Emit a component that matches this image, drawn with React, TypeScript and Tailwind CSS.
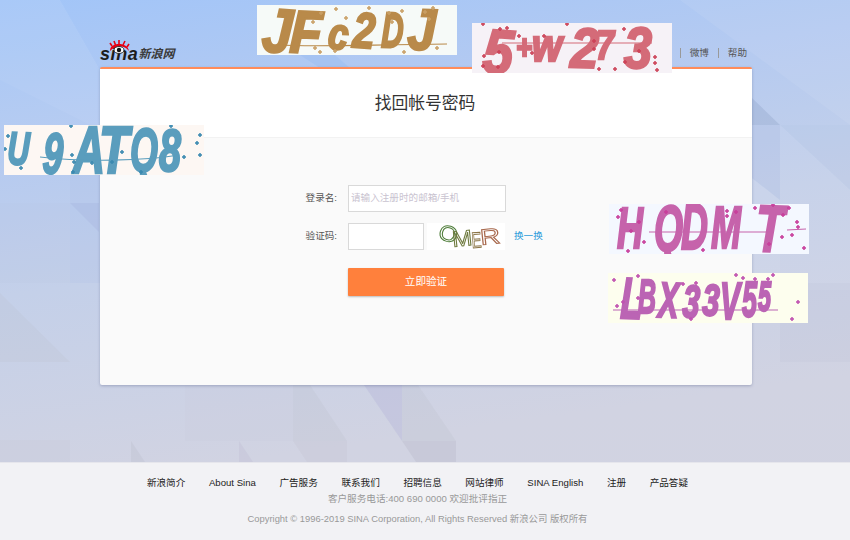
const cjk = '"Liberation Sans", "Noto Sans CJK SC", sans-serif';

// char, x, width, baseline, font size, rotation
type Glyph = [string, number, number, number, number, number?];

type CaptchaProps = {
  glyphs: Glyph[];
  color: string;
  dot: string;
  bg: string;
  line: string;
  noise: [number, number][];
  className: string;
};

// distorted code pictures that sit on top of the page
function Captcha({ glyphs, color, dot, bg, line, noise, className }: CaptchaProps) {
  return (
    <svg width="200" height="50" viewBox="0 0 200 50" className={`absolute ${className}`} style={{ background: bg }}>
      <g className="blur-[0.4px]">
        {glyphs.map(([ch, x, w, y, size, rot], i) => (
          <text
            key={i}
            transform={`translate(${x} ${y}) rotate(${rot ?? 0})`}
            textLength={w}
            lengthAdjust="spacingAndGlyphs"
            fontFamily="Liberation Sans"
            fontWeight="700"
            fontStyle="italic"
            fontSize={size}
            fill={color}
            stroke={color}
            strokeWidth="2.4"
          >
            {ch}
          </text>
        ))}
        <path d={line} stroke={color} strokeWidth="1.1" fill="none" />
        {noise.map(([x, y], i) => (
          <path key={i} d={`M${x - 2} ${y}H${x + 2}M${x} ${y - 2}V${y + 2}`} stroke={dot} strokeWidth="1.5" />
        ))}
      </g>
    </svg>
  );
}

function Background() {
  return (
    <svg className="absolute inset-0" width="850" height="540" viewBox="0 0 850 540">
      {/* top left */}
      <polygon points="0,0 60,0 100,70 100,130 0,80" fill="#ffffff" fillOpacity="0.08" />
      <polygon points="0,80 100,130 100,170 0,170" fill="#ffffff" fillOpacity="0.04" />
      <polygon points="300,55 335,55 350,68 320,68" fill="#7fb0f2" fillOpacity="0.2" />
      {/* top right */}
      <polygon points="680,0 850,125 850,0" fill="#ffffff" fillOpacity="0.07" />
      <polygon points="752,98 780,125 752,125" fill="#8fa4c9" fillOpacity="0.35" />
      <polygon points="752,125 780,125 780,200 752,178" fill="#a9b8e0" fillOpacity="0.2" />
      <polygon points="780,125 850,190 850,125" fill="#a9b8dc" fillOpacity="0.1" />
      <polygon points="780,125 850,190 850,290 780,290" fill="#ffffff" fillOpacity="0.06" />
      <polygon points="752,178 780,200 780,290 752,290" fill="#ffffff" fillOpacity="0.1" />
      <polygon points="780,283 850,283 850,362 780,362" fill="#a8a8c0" fillOpacity="0.08" />
      {/* left side */}
      <polygon points="70,170 100,170 100,283 70,283" fill="#a9bce4" fillOpacity="0.16" />
      <polygon points="70,203 99,203 99,232" fill="#a3b0dc" fillOpacity="0.3" />
      <polygon points="0,203 70,203 70,283 0,283" fill="#b7bed8" fillOpacity="0.08" />
      <polygon points="0,293 70,362 0,362" fill="#bcbecc" fillOpacity="0.22" />
      <polygon points="0,440 70,440 70,462 0,462" fill="#bcbecc" fillOpacity="0.14" />
      {/* bottom band */}
      <polygon points="293,385 310,385 347,441 293,441" fill="#bbbecd" fillOpacity="0.25" />
      <polygon points="364,385 402,385 402,441" fill="#b3b3d8" fillOpacity="0.35" />
      <polygon points="402,385 418,385 456,441 402,441" fill="#bbbecd" fillOpacity="0.25" />
      <polygon points="402,441 456,441 456,462 416,462" fill="#b8b8c8" fillOpacity="0.35" />
      <polygon points="131,441 145,462 131,462" fill="#b8bccb" fillOpacity="0.3" />
      <polygon points="239,441 253,462 239,462" fill="#bdb8d0" fillOpacity="0.3" />
      <polygon points="293,441 347,441 347,462 307,462" fill="#c4c2d2" fillOpacity="0.3" />
      <polygon points="185,385 293,385 293,441 185,441" fill="#c0c4d6" fillOpacity="0.1" />
    </svg>
  );
}

function SinaLogo() {
  return (
    <div className="flex items-end h-[25px] w-[78px] relative pb-[2px]">
      <svg width="22" height="14" viewBox="0 0 22 14" className="absolute left-[8px] top-[2px]">
        <path d="M2 11C2 6 6 4 11 4s9 2 10 7C18 7 14 6.5 11 6.5S5 8 2 11Z" fill="#e60012" />
        <path d="M4 6 2 3M7.500 5 6 1M11 4V0M15 5l2-4M19 7l2-3" stroke="#e60012" strokeWidth="1.6" />
        <ellipse cx="11" cy="10" rx="5" ry="3.500" fill="#fff" stroke="#222" strokeWidth="0.900" />
        <circle cx="11" cy="10" r="2.200" fill="#111" />
      </svg>
      <span
        className="font-bold italic text-[18px] leading-[14px] tracking-[0.6px] text-[#1c1c1c]"
        style={{ fontFamily: "Liberation Sans" }}
      >
        sina
      </span>
      <span className="italic font-bold text-[12px] leading-[14px] text-[#3a3a3a]">新浪网</span>
    </div>
  );
}

function SmallCaptcha() {
  return (
    <svg width="78" height="27" viewBox="0 0 78 27" className="bg-white">
      <g className="blur-[0.3px]" fontFamily="Liberation Sans" fontSize="22" fill="none" strokeWidth="1">
        <text transform="translate(10 15) rotate(18)" textLength="19" lengthAdjust="spacingAndGlyphs" stroke="#4f7d3a">O</text>
        <text transform="translate(26 24) rotate(-6)" textLength="20" lengthAdjust="spacingAndGlyphs" stroke="#6f7a3e">M</text>
        <text transform="translate(45 25) rotate(-4)" textLength="10" lengthAdjust="spacingAndGlyphs" stroke="#8a7446">E</text>
        <text transform="translate(54 22) rotate(-6)" textLength="20" lengthAdjust="spacingAndGlyphs" stroke="#a8694d">R</text>
      </g>
    </svg>
  );
}

const footerLinks = ["新浪简介", "About Sina", "广告服务", "联系我们", "招聘信息", "网站律师", "SINA English", "注册", "产品答疑"];

export default function App() {
  return (
    <div
      className="relative w-[850px] h-[540px] overflow-hidden flex flex-col bg-[linear-gradient(172deg,#a2c5f8_0%,#b4caf1_22%,#c4d0e9_45%,#d1d3e2_75%,#d2d3e1_100%)]"
      style={{ fontFamily: cjk }}
    >
      <Background />

      <div className="relative w-[652px] ml-[100px] flex-1 flex flex-col">
        <div className="h-[67px] flex items-end justify-between pb-[4px]">
          <SinaLogo />
          <div className="flex items-center text-[9.6px] text-[#555] pb-[3px] pr-[5px]">
            <span className="h-[10px] border-l border-[#999] mr-[9px]" />
            <span>微博</span>
            <span className="h-[10px] border-l border-[#999] mx-[9px]" />
            <span>帮助</span>
          </div>
        </div>

        <div className="h-[318px] bg-[#fafafa] border-t-2 border-[#ff8c5a] rounded-[2px] shadow-[0_1px_3px_rgba(90,100,140,0.4)] flex flex-col">
          <div className="h-[69px] bg-white border-b border-[#f2f2f2] flex items-center justify-center pt-[1px] pr-[2px] text-[16.8px] text-[#333]">
            找回帐号密码
          </div>

          <div className="pt-[47px] flex flex-col text-[9.6px] text-[#555]">
            <div className="flex items-center h-[27px]">
              <span className="w-[237px] text-right">登录名:</span>
              <div className="ml-[11px] w-[158px] h-[27px] bg-white border border-[#d9d9d9] pl-[2px] flex items-center text-[#c9c3d0]">
                请输入注册时的邮箱/手机
              </div>
            </div>
            <div className="flex items-center h-[27px] mt-[11px]">
              <span className="w-[237px] text-right">验证码:</span>
              <div className="ml-[11px] w-[76px] h-[27px] bg-white border border-[#d9d9d9]" />
              <div className="ml-[3px]">
                <SmallCaptcha />
              </div>
              <span className="ml-[9px] text-[#2d9cdb]">换一换</span>
            </div>
            <div className="ml-[248px] mt-[18px] w-[156px] h-[28px] bg-[#ff803c] rounded-[1px] shadow-[0_1px_2px_rgba(0,0,0,0.25)] flex items-center justify-center text-white text-[10.6px]">
              立即验证
            </div>
          </div>
        </div>
      </div>

      <div className="relative h-[78px] bg-[#f2f2f5] border-t border-[#e6e6ec] flex flex-col items-center pt-[14px] pr-[15px]">
        <div className="flex gap-[23.6px] text-[9.6px] leading-[11px] text-[#222]">
          {footerLinks.map((t) => (
            <span key={t}>{t}</span>
          ))}
        </div>
        <div className="mt-[5px] text-[9.6px] leading-[11px] text-[#999]">客户服务电话:400 690 0000 欢迎批评指正</div>
        <div className="mt-[9px] text-[9.4px] leading-[11px] text-[#999]">Copyright © 1996-2019 SINA Corporation, All Rights Reserved 新浪公司 版权所有</div>
      </div>

      <Captcha
        className="left-[257px] top-[5px]"
        bg="#f6faf8"
        color="#b98a4a"
        dot="#c9a066"
        line="M20 40C60 42 100 40 190 39"
        glyphs={[
          ["J", 4, 30, 46, 62, 4],
          ["F", 32, 32, 47, 60, 3],
          ["c", 70, 20, 43, 44, 6],
          ["2", 95, 22, 42, 50, 4],
          ["D", 124, 22, 42, 50, 2],
          ["J", 150, 28, 44, 58, 2],
        ]}
        noise={[[56, 17], [64, 8], [79, 4], [89, 13], [112, 3], [132, 8], [135, 17], [145, 6], [58, 43], [63, 47], [78, 46], [168, 7], [172, 14], [176, 3], [180, 43], [147, 47]]}
      />
      <Captcha
        className="left-[472px] top-[23px]"
        bg="#f6f2f7"
        color="#d46b78"
        dot="#cc4157"
        line="M30 20H180"
        glyphs={[
          ["5", 10, 30, 49, 62, 4],
          ["+", 44, 16, 36, 34],
          ["w", 60, 30, 38, 44],
          ["2", 98, 28, 44, 56, 2],
          ["7", 124, 18, 36, 40],
          ["3", 152, 28, 45, 58],
        ]}
        noise={[[11, 1], [28, 6], [35, 5], [95, 1], [47, 13], [72, 13], [27, 29], [60, 30], [12, 33], [11, 43], [26, 44], [152, 6], [122, 18], [122, 26], [167, 28], [127, 46], [143, 46], [153, 39], [183, 34], [183, 40], [185, 47]]}
      />
      <Captcha
        className="left-[4px] top-[125px]"
        bg="#fdf7f3"
        color="#5a9dbd"
        dot="#3a89b0"
        line="M36 32C80 37 140 36 175 30"
        glyphs={[
          ["U", 3, 22, 39, 46, 2],
          ["9", 38, 20, 48, 58, 3],
          ["A", 69, 32, 48, 66],
          ["T", 95, 30, 48, 66],
          ["Q", 126, 28, 46, 62],
          ["8", 155, 22, 46, 60],
        ]}
        noise={[[1, 24], [4, 11], [17, 43], [67, 1], [167, 1], [196, 10], [193, 18], [196, 30], [68, 30], [70, 37], [88, 38], [108, 37], [118, 27], [137, 47], [180, 32], [69, 47]]}
      />
      <Captcha
        className="left-[609px] top-[204px]"
        bg="#f4f8ff"
        color="#c663ab"
        dot="#c83d9c"
        line="M40 28H165M178 26 197 25"
        glyphs={[
          ["H", 8, 26, 44, 58],
          ["Q", 45, 29, 47, 64],
          ["D", 72, 27, 45, 64],
          ["M", 102, 30, 44, 60],
          ["T", 146, 28, 47, 66, 2],
        ]}
        noise={[[12, 6], [9, 13], [22, 27], [30, 18], [57, 8], [35, 38], [94, 46], [118, 12], [127, 8], [118, 7], [146, 4], [164, 1], [180, 4], [174, 11], [188, 18], [189, 23], [183, 31], [195, 44], [19, 47], [160, 40], [173, 33]]}
      />
      <Captcha
        className="left-[608px] top-[273px]"
        bg="#fdfeee"
        color="#bb64b4"
        dot="#c050b0"
        line="M5 37H170"
        glyphs={[
          ["L", 12, 22, 45, 58, 2],
          ["B", 30, 18, 40, 48],
          ["X", 50, 20, 44, 50, 2],
          ["3", 74, 17, 44, 46, 3],
          ["3", 94, 17, 42, 44, 2],
          ["V", 112, 20, 46, 52],
          ["5", 134, 15, 44, 50],
          ["5", 150, 13, 38, 42],
        ]}
        noise={[[6, 7], [30, 3], [15, 29], [9, 33], [30, 25], [88, 10], [75, 11], [128, 2], [135, 5], [147, 6], [160, 6], [165, 2], [190, 29], [184, 46], [83, 46]]}
      />
    </div>
  );
}
